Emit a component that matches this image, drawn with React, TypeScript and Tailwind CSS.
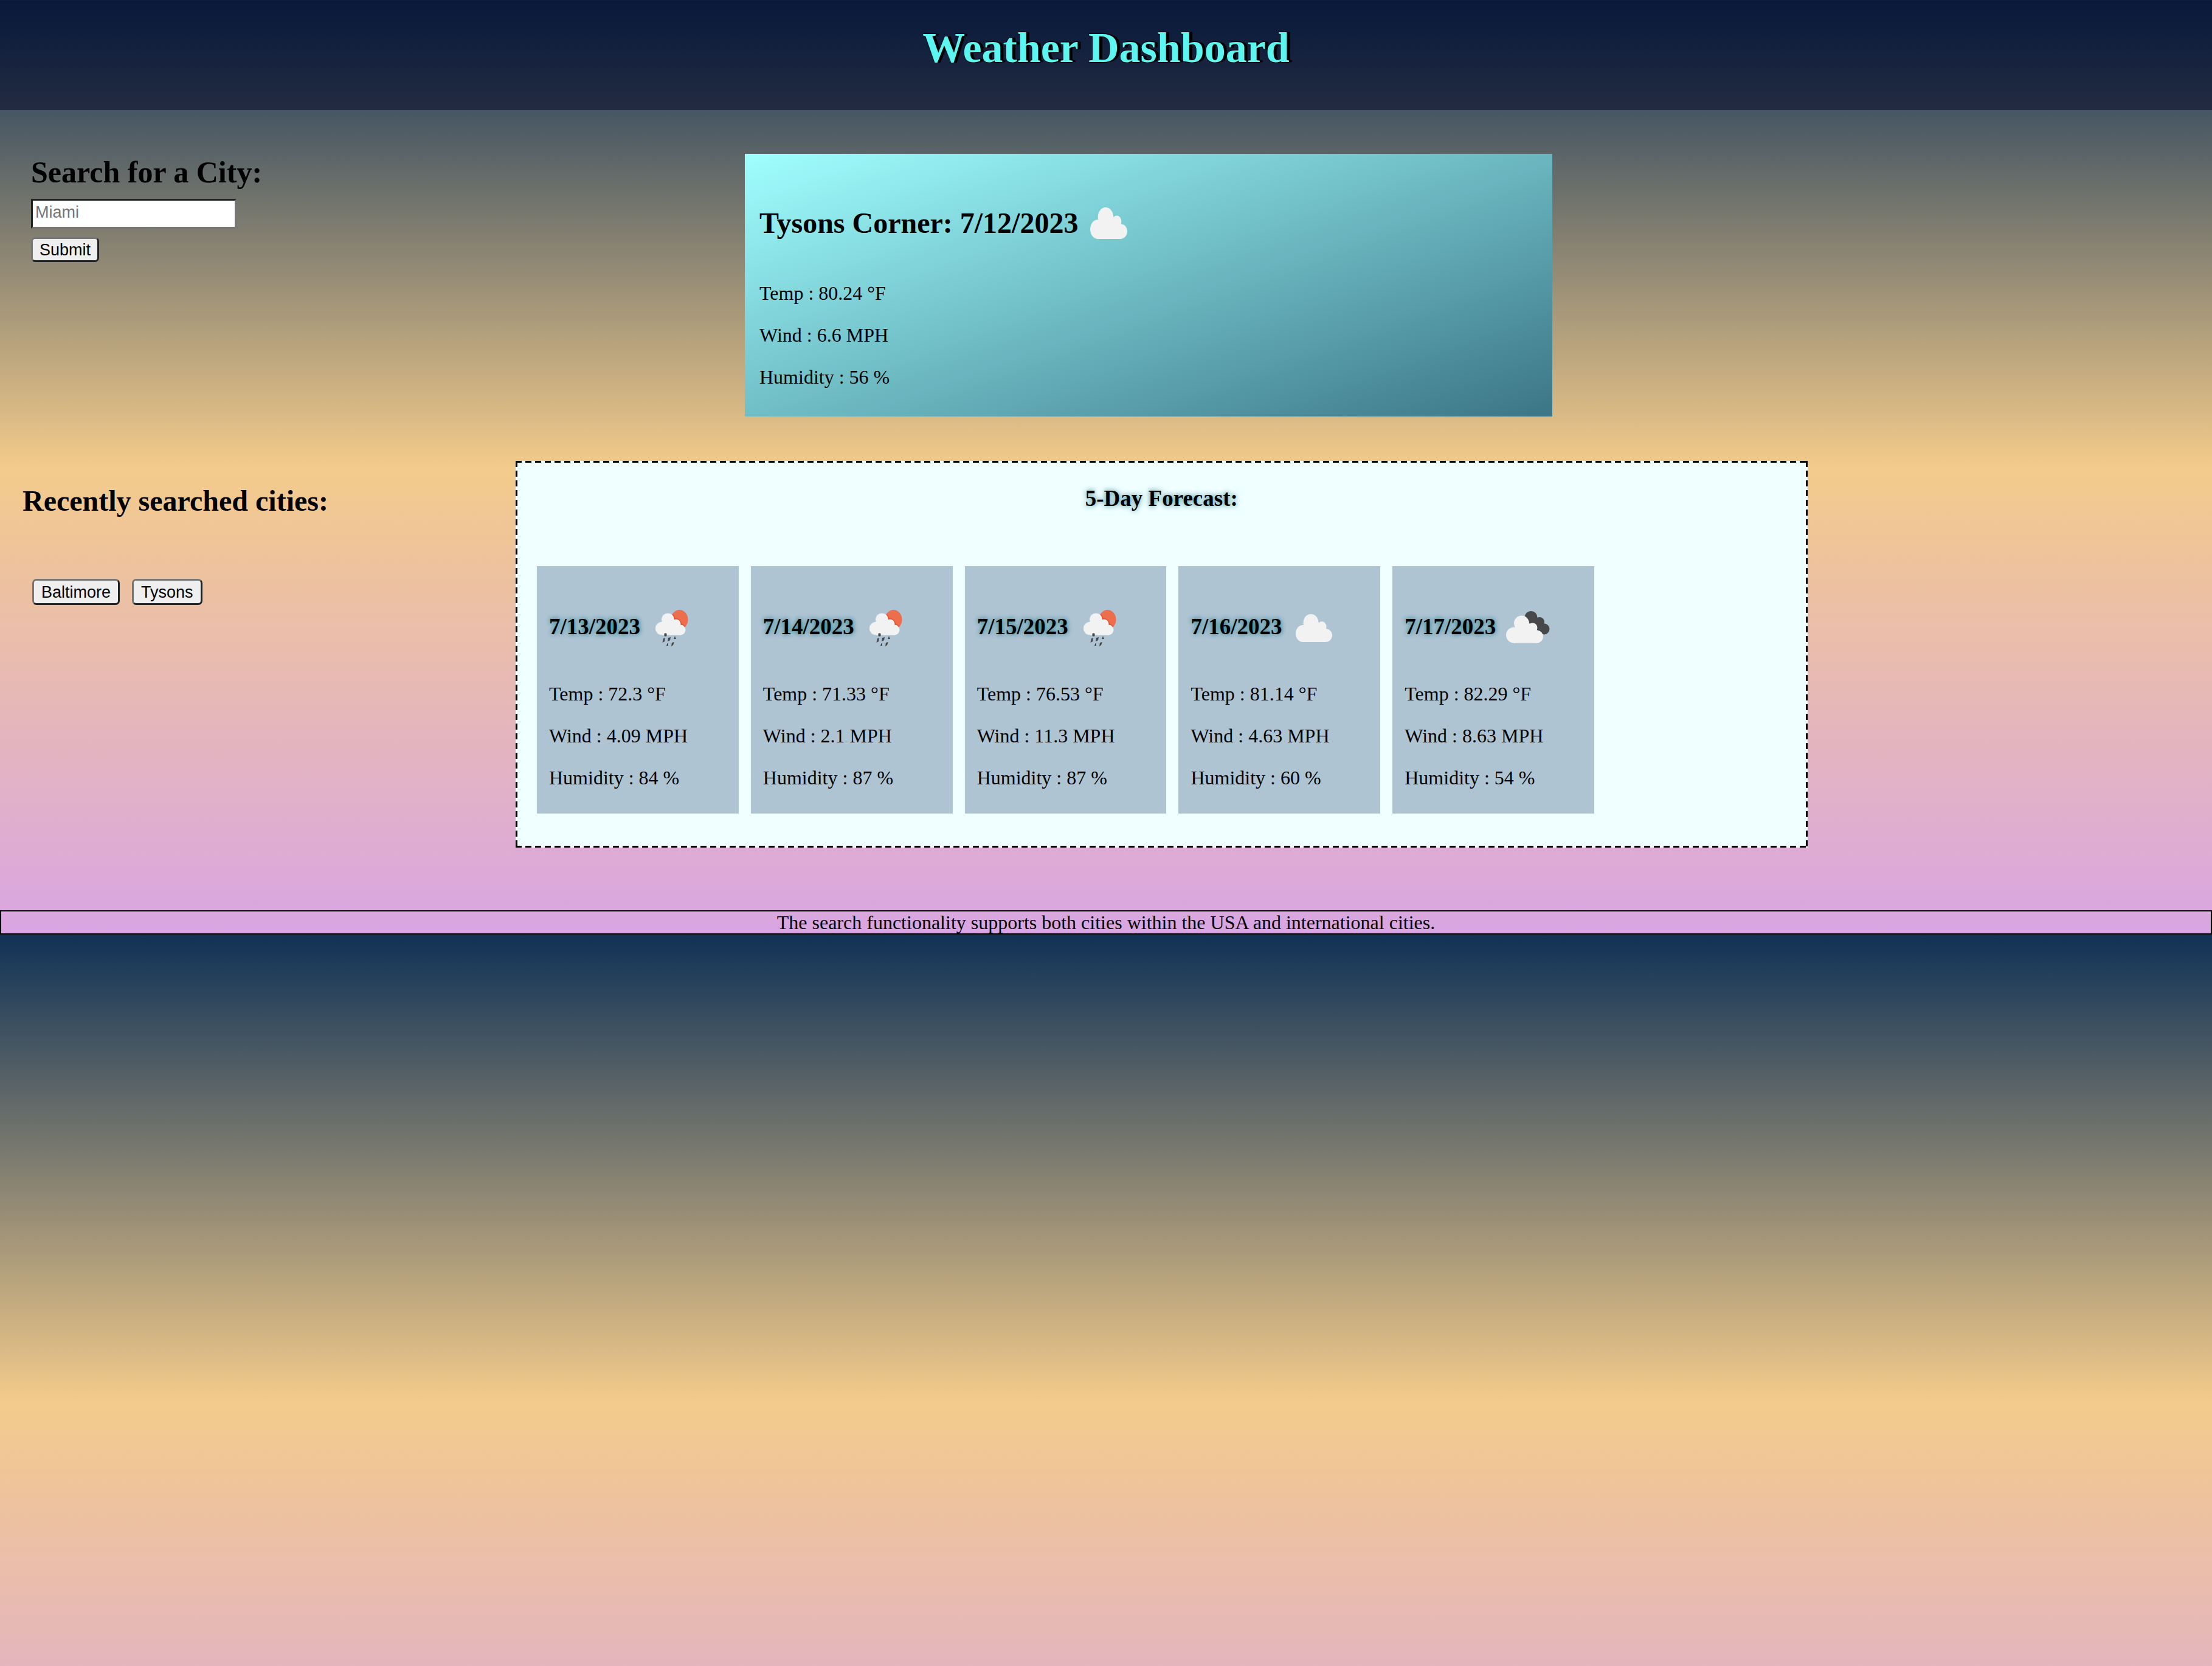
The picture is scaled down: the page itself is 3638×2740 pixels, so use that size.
import React from "react";

type IconName = "cloud" | "rain" | "broken";

function CloudShape() {
  return (
    <g fill="#f2f2f2">
      <ellipse cx="25" cy="14" rx="12.5" ry="14" />
      <ellipse cx="12" cy="32" rx="12" ry="14" />
      <ellipse cx="43" cy="21" rx="7.5" ry="9" />
      <ellipse cx="49" cy="35" rx="11" ry="11" />
      <path d="M11 20 L36 12 L50 26 L50 46 L11 46 Z" />
    </g>
  );
}

function RainCloud() {
  return (
    <>
      <circle cx="20.5" cy="16" r="10.5" />
      <circle cx="10.8" cy="30.5" r="10.8" />
      <circle cx="34" cy="23" r="7.5" />
      <circle cx="41" cy="33" r="8.5" />
      <path d="M11 22 L29 14 L41 26 L42 41.5 L11 41.5 Z" />
    </>
  );
}

function WeatherIcon({ name, tall }: { name: IconName; tall?: boolean }) {
  if (name === "rain") {
    return (
      <svg viewBox="0 0 54 60" className="mt-1 ml-[25px] h-[60px] w-[54px] shrink-0" aria-label="Rain with sun" role="img">
        <clipPath id="sun">
          <ellipse cx="39.5" cy="16" rx="14" ry="16" />
        </clipPath>
        <g clipPath="url(#sun)">
          <path d="M20 0 H54 V27 L48 30 H20 Z" fill="#ec6e4c" />
          <g fill="#ea4c2c" stroke="#ea4c2c" strokeWidth="3">
            <RainCloud />
          </g>
        </g>
        <g fill="#f2f2f2">
          <RainCloud />
        </g>
        <g fill="#48484a">
          <rect x="14.5" y="38.5" width="4" height="5" rx="1" />
          <path d="M13 47 L16 46 L15 52 L11.5 54 Z" />
          <path d="M21 46 L25 45 L24 50 L20 52 Z" />
          <path d="M30 48 L32 43 L34 48 Z" />
          <path d="M19 56 L21 54 L21 59 L18 59 Z" />
          <path d="M27 54 L31 53 L29 58 L26 60 Z" />
        </g>
      </svg>
    );
  }
  if (name === "broken") {
    return (
      <svg viewBox="0 0 72 53" className="ml-[17px] h-[53px] w-[72px] shrink-0" aria-label="Broken clouds" role="img">
        <g fill="#48484a">
          <circle cx="41" cy="10.5" r="10.5" />
          <circle cx="55" cy="18" r="8" />
          <circle cx="62.5" cy="29.5" r="9" />
          <path d="M41 2 L60 20 L62 38 L40 24 Z" />
        </g>
        <g fill="#f2f2f2">
          <circle cx="25.5" cy="20" r="12.5" />
          <circle cx="13" cy="39.5" r="13" />
          <circle cx="43.5" cy="27.5" r="8" />
          <circle cx="50.5" cy="42" r="10.5" />
          <path d="M12 28 L36 18 L50 33 L51 52.5 L12 52.5 Z" />
        </g>
      </svg>
    );
  }
  return tall ? (
    <svg viewBox="0 0 60 46" preserveAspectRatio="none" className="ml-5 h-[52px] w-[61px] shrink-0" aria-label="Cloudy" role="img">
      <CloudShape />
    </svg>
  ) : (
    <svg viewBox="0 0 60 46" className="mt-1 ml-[22px] h-[46px] w-[60px] shrink-0" aria-label="Cloudy" role="img">
      <CloudShape />
    </svg>
  );
}

type Day = { date: string; icon: IconName; temp: string; wind: string; humidity: string };

const DAYS: Day[] = [
  { date: "7/13/2023", icon: "rain", temp: "72.3", wind: "4.09", humidity: "84" },
  { date: "7/14/2023", icon: "rain", temp: "71.33", wind: "2.1", humidity: "87" },
  { date: "7/15/2023", icon: "rain", temp: "76.53", wind: "11.3", humidity: "87" },
  { date: "7/16/2023", icon: "cloud", temp: "81.14", wind: "4.63", humidity: "60" },
  { date: "7/17/2023", icon: "broken", temp: "82.29", wind: "8.63", humidity: "54" },
];

const RECENT = ["Baltimore", "Tysons"];

const BUTTON =
  "rounded-[7px] border-[3px] border-t-[#767676] border-l-[#767676] border-r-[#212121] border-b-[#212121] bg-[#efefef] font-['Liberation_Sans',Arial,sans-serif] text-[27px] text-black";

const DASHED_FRAME =
  "bg-[#f0ffff] bg-[image:repeating-linear-gradient(90deg,#000_0_10px,transparent_10px_16px),repeating-linear-gradient(90deg,#000_0_10px,transparent_10px_16px),repeating-linear-gradient(#000_0_10px,transparent_10px_16px),repeating-linear-gradient(#000_0_10px,transparent_10px_16px)] bg-[length:100%_3px,100%_3px,3px_100%,3px_100%] bg-[position:left_top,left_bottom,left_top,right_top] bg-no-repeat";

function Readings({ temp, wind, humidity }: { temp: string; wind: string; humidity: string }) {
  return (
    <div className="flex flex-col gap-8 leading-[37px]">
      <p>Temp : {temp} °F</p>
      <p>Wind : {wind} MPH</p>
      <p>Humidity : {humidity} %</p>
    </div>
  );
}

export default function App() {
  return (
    <div className="min-h-screen bg-[linear-gradient(#103256,#f3cb8b_50%,#d9a5e3)] bg-[length:100%_1537px] font-['Liberation_Serif','Times_New_Roman',serif] text-[32px] text-black">
      <header className="bg-[#000020]/50 pt-[39px] pb-[62px] text-center">
        <h1 className="text-[70px] leading-[80px] font-bold text-[#5df5f0] [text-shadow:5px_0_1px_#000,4px_0_1px_#000,3px_0_1px_#000,2px_0_1px_#000,0_1px_1px_#000,0_-1px_1px_#000]">
          Weather Dashboard
        </h1>
      </header>

      <main className="pb-[103px]">
        <section className="flex pt-[72px]">
          <form className="w-[1225px] shrink-0 pt-px pl-[51px]" onSubmit={(e) => e.preventDefault()}>
            <label htmlFor="city" className="block text-[50px] leading-[58px] font-bold">
              Search for a City:
            </label>
            <input
              id="city"
              type="text"
              placeholder="Miami"
              className="mt-[15px] block h-[49px] w-[338px] border-[3px] border-t-[#212121] border-r-[#767676] border-b-[#767676] border-l-[#212121] bg-white px-1 pb-1 font-['Liberation_Sans',Arial,sans-serif] text-[27px] placeholder:text-[#757575]"
            />
            <button type="submit" className={`${BUTTON} mt-[14px] h-[41px] px-[11px] leading-[32px]`}>
              Submit
            </button>
          </form>
          <article className="w-[36.5%] bg-[linear-gradient(160deg,#a0ffff,#3b7586)] px-6 pt-[85px] pb-[46px]">
            <h2 className="mb-[69px] flex h-[57px] items-center text-[48px] leading-[56px] font-bold">
              Tysons Corner: 7/12/2023
              <WeatherIcon name="cloud" tall />
            </h2>
            <Readings temp="80.24" wind="6.6" humidity="56" />
          </article>
        </section>

        <section className="mt-[73px] flex">
          <div className="w-[848px] shrink-0 pt-[38px] pl-[37px]">
            <h2 className="text-[48px] leading-[56px] font-bold">Recently searched cities:</h2>
            <div className="mt-[100px] ml-4 flex gap-5">
              {RECENT.map((city) => (
                <button key={city} type="button" className={`${BUTTON} h-[43px] px-3 leading-[34px]`}>
                  {city}
                </button>
              ))}
            </div>
          </div>
          <div className={`${DASHED_FRAME} w-[58.4%] px-[35px] pt-[41px] pb-[56px]`}>
            <h3 className="text-center text-[37px] leading-[42px] font-bold [text-shadow:0_0_8px_#2f7f8c]">5-Day Forecast:</h3>
            <div className="mt-[90px] flex gap-5">
              {DAYS.map((d) => (
                <article key={d.date} className="w-[16.15%] bg-[#afc4d3] px-5 pt-[68px] pb-[40px]">
                  <h3 className="mb-[60px] flex h-[64px] items-center text-[37px] leading-[42px] font-bold [text-shadow:0_0_8px_#007080]">
                    {d.date}
                    <WeatherIcon name={d.icon} />
                  </h3>
                  <Readings temp={d.temp} wind={d.wind} humidity={d.humidity} />
                </article>
              ))}
            </div>
          </div>
        </section>
      </main>

      <footer className="border-2 border-black text-center leading-[36px]">
        The search functionality supports both cities within the USA and international cities.
      </footer>
    </div>
  );
}
